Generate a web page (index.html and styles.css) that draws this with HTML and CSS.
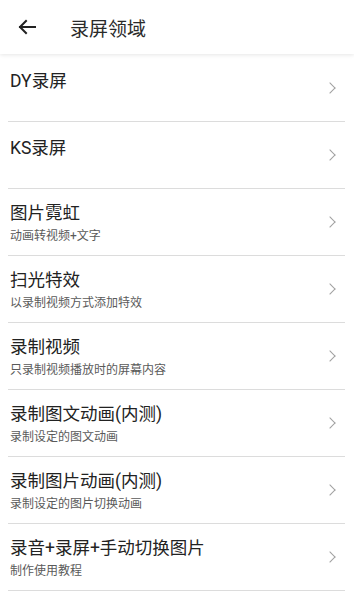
FILE: index.html
```html
<!DOCTYPE html>
<html lang="zh">
<head>
<meta charset="utf-8">
<link rel="stylesheet" href="styles.css">
</head>
<body>
<header class="topbar">
  <svg class="back" width="20" height="16" viewBox="0 0 20 16"><path d="M18 8H3M9 2L3 8l6 6" fill="none" stroke="#222" stroke-width="2" stroke-linecap="square"/></svg>
  <h1 class="title">录屏领域</h1>
</header>
<ul class="list">
  <li class="item plain"><div class="text"><div class="name">DY录屏</div></div><span class="chev"></span></li>
  <li class="item plain"><div class="text"><div class="name">KS录屏</div></div><span class="chev"></span></li>
  <li class="item"><div class="text"><div class="name">图片霓虹</div><div class="sub">动画转视频+文字</div></div><span class="chev"></span></li>
  <li class="item"><div class="text"><div class="name">扫光特效</div><div class="sub">以录制视频方式添加特效</div></div><span class="chev"></span></li>
  <li class="item"><div class="text"><div class="name">录制视频</div><div class="sub">只录制视频播放时的屏幕内容</div></div><span class="chev"></span></li>
  <li class="item"><div class="text"><div class="name">录制图文动画(内测)</div><div class="sub">录制设定的图文动画</div></div><span class="chev"></span></li>
  <li class="item"><div class="text"><div class="name">录制图片动画(内测)</div><div class="sub">录制设定的图片切换动画</div></div><span class="chev"></span></li>
  <li class="item"><div class="text"><div class="name">录音+录屏+手动切换图片</div><div class="sub">制作使用教程</div></div><span class="chev"></span></li>
</ul>
</body>
</html>
```
FILE: styles.css
```css
* { box-sizing: border-box; }
html, body { margin: 0; padding: 0; background: #fff; }
body {
  font-family: Roboto, "Noto Sans CJK SC", sans-serif;
  color: #222;
  width: 354px;
  overflow: hidden;
}
.topbar {
  height: 54px;
  display: flex;
  align-items: center;
  background: #fff;
  box-shadow: 0 1px 4px rgba(0,0,0,0.1);
  position: relative;
  z-index: 1;
}
.back { margin-left: 17px; flex: none; }
.title {
  margin: 0 0 0 33px;
  font-size: 19px;
  font-weight: 400;
  color: #2a2a2a;
}
.list { list-style: none; margin: 0; padding: 1px 0 0; }
.item {
  height: 67px;
  margin: 0 9px 0 8px;
  border-bottom: 1px solid #dcdcdc;
  display: flex;
  align-items: flex-start;
  padding: 12px 0 0 2px;
}
.item.plain { padding-top: 14px; }
.text { flex: 1; }
.name { font-size: 17.5px; line-height: 24px; color: #222; }
.sub { font-size: 12px; line-height: 16px; color: #5a5a5a; margin-top: 3px; }
.chev {
  flex: none;
  width: 8px;
  height: 8px;
  border-top: 1.2px solid #a0a0a0;
  border-right: 1.2px solid #a0a0a0;
  transform: rotate(45deg);
  margin: 17px 11px 0 0;
  align-self: flex-start;
}
.item.plain .chev { margin-top: 15px; }
```
